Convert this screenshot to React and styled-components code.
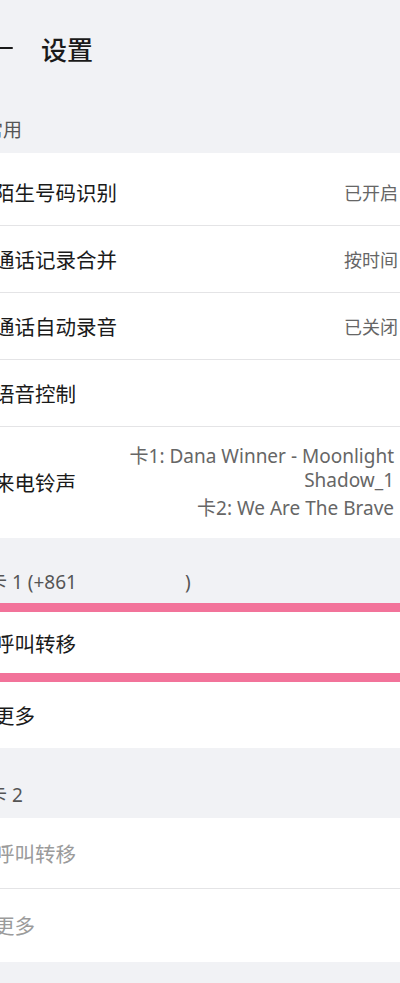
import React from 'react';
import styled, { createGlobalStyle } from 'styled-components';

const GlobalStyle = createGlobalStyle`
  html, body {
    margin: 0;
    padding: 0;
    background: #f1f2f5;
  }
  body {
    font-family: "Noto Sans", "Noto Sans CJK SC", sans-serif;
  }
`;

const Page = styled.div`
  width: 400px;
  height: 983px;
  overflow: hidden;
  background: #f1f2f5;
`;

const Header = styled.header`
  height: 96px;
  display: flex;
  align-items: center;
  gap: 28px;
`;

const BackIcon = styled.svg`
  width: 26px;
  height: 26px;
  margin-left: -13px;
  color: #1a1a1a;
`;

const Title = styled.h1`
  margin: 0;
  font-family: "Noto Sans CJK SC", sans-serif;
  font-size: 26px;
  font-weight: 500;
  color: #1a1a1a;
`;

const SectionLabel = styled.div`
  height: ${p => p.$h}px;
  box-sizing: border-box;
  display: flex;
  align-items: flex-end;
  padding-bottom: ${p => p.$pb}px;
  margin-left: ${p => p.$offset}px;
  font-family: "Noto Sans", "Noto Sans CJK SC", sans-serif;
  font-size: 19px;
  line-height: 24px;
  color: #555;
  white-space: pre;
`;

const Hidden = styled.span`
  display: inline-block;
  width: 108px;
`;

const Card = styled.section`
  background: #fff;
  padding-top: ${p => p.$pt || 0}px;
`;

const Row = styled.div`
  min-height: ${p => p.$h}px;
  box-sizing: border-box;
  display: flex;
  align-items: center;
  justify-content: space-between;
  gap: 16px;
  padding: 0 2px 0 0;
  border-bottom: 1px solid ${p => (p.$last ? 'transparent' : '#e4e4e6')};
  ${p => p.$highlight && `
    border-top: 9px solid #f2739a;
    border-bottom: 9px solid #f2739a;
  `}
`;

const RowTitle = styled.span`
  margin-left: -6px;
  font-family: "Noto Sans CJK SC", sans-serif;
  font-size: 20.5px;
  color: ${p => (p.$muted ? '#9b9b9b' : '#1a1a1a')};
  white-space: nowrap;
  flex-shrink: 0;
`;

const RowValue = styled.span`
  font-family: "Noto Sans CJK SC", sans-serif;
  font-size: 18px;
  color: #666;
  white-space: nowrap;
`;

const RingValue = styled.div`
  display: flex;
  flex-direction: column;
  align-items: flex-end;
  gap: 4px;
  padding-right: 4px;
  text-align: right;
  font-family: "Noto Sans", "Noto Sans CJK SC", sans-serif;
  font-size: 19px;
  line-height: 24px;
  color: #666;
  width: 275px;
`;

const Gap = styled.div`
  height: ${p => p.$h}px;
`;

const App = () => {
  return (
    <Page>
      <GlobalStyle />
      <Header>
        <BackIcon viewBox="0 0 26 26" fill="none" stroke="currentColor" strokeWidth="2" strokeLinecap="round">
          <path d="M3 13H25" />
          <path d="M10 5L3 13L10 21" />
        </BackIcon>
        <Title>设置</Title>
      </Header>

      <SectionLabel $h={57} $pb={11} $offset={-16}>常用</SectionLabel>
      <Card $pt={6}>
        <Row $h={67}>
          <RowTitle>陌生号码识别</RowTitle>
          <RowValue>已开启</RowValue>
        </Row>
        <Row $h={67}>
          <RowTitle>通话记录合并</RowTitle>
          <RowValue>按时间</RowValue>
        </Row>
        <Row $h={67}>
          <RowTitle>通话自动录音</RowTitle>
          <RowValue>已关闭</RowValue>
        </Row>
        <Row $h={67}>
          <RowTitle>语音控制</RowTitle>
        </Row>
        <Row $h={111} $last>
          <RowTitle>来电铃声</RowTitle>
          <RingValue>
            <span>卡1: Dana Winner - Moonlight Shadow_1</span>
            <span>卡2: We Are The Brave</span>
          </RingValue>
        </Row>
      </Card>

      <SectionLabel $h={65} $pb={9} $offset={-12}>
        卡 1 (+861<Hidden />)
      </SectionLabel>
      <Card>
        <Row $h={79} $highlight>
          <RowTitle>呼叫转移</RowTitle>
        </Row>
        <Row $h={66} $last>
          <RowTitle>更多</RowTitle>
        </Row>
      </Card>

      <SectionLabel $h={70} $pb={11} $offset={-12}>卡 2</SectionLabel>
      <Card>
        <Row $h={71}>
          <RowTitle $muted>呼叫转移</RowTitle>
        </Row>
        <Row $h={73} $last>
          <RowTitle $muted>更多</RowTitle>
        </Row>
      </Card>
      <Gap $h={21} />
    </Page>
  );
};

export default App;
